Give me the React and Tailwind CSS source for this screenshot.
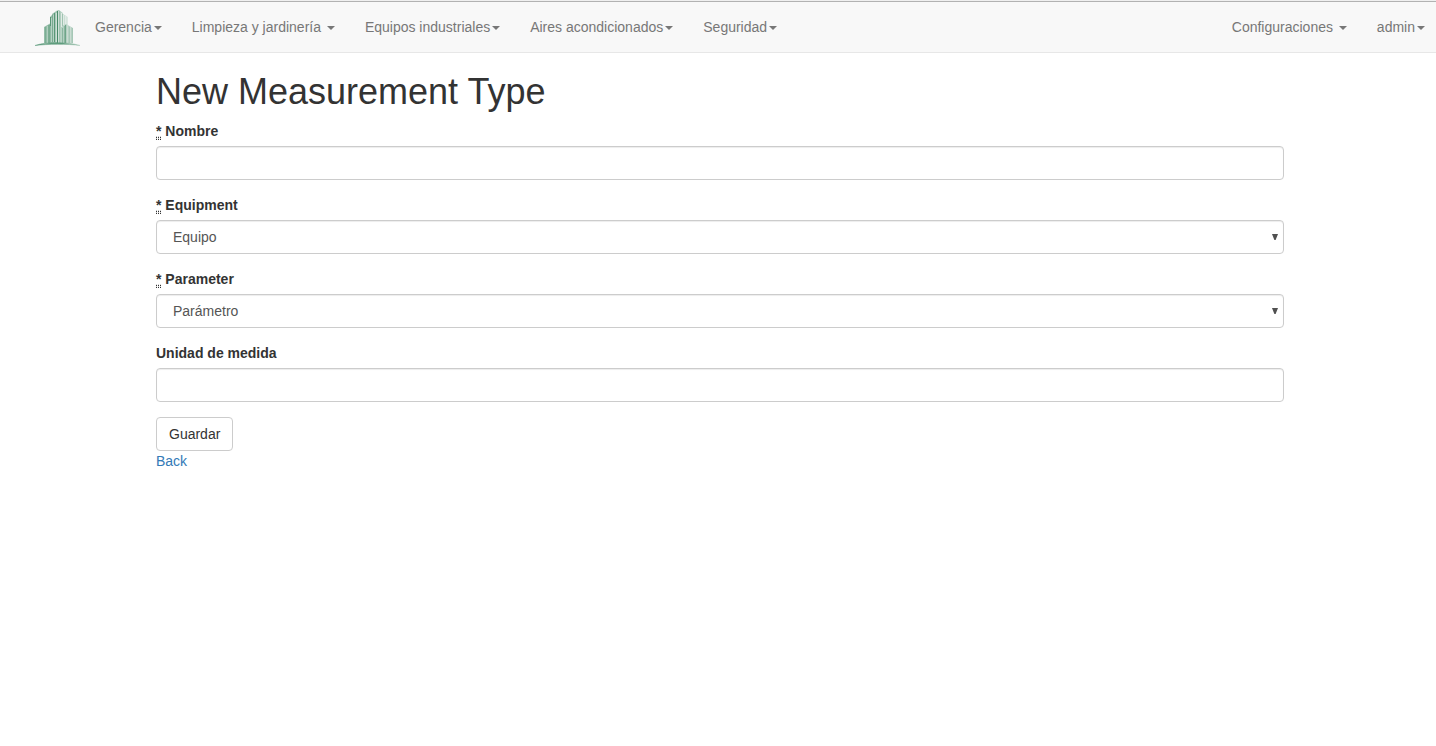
import React from "react";

const caret =
  "inline-block h-0 w-0 border-x-4 border-t-4 border-x-transparent border-t-[#777] align-middle";

function Logo() {
  return (
    <svg width="45" height="38" viewBox="0 0 45 38" aria-hidden="true">
      <defs>
        <linearGradient id="ground" x1="0" x2="1" y1="0" y2="0">
          <stop offset="0" stopColor="#5f9c7d" />
          <stop offset="0.6" stopColor="#5f9c7d" />
          <stop offset="1" stopColor="#a9c9b8" />
        </linearGradient>
        <linearGradient id="tower" x1="0" x2="1" y1="0" y2="0">
          <stop offset="0" stopColor="#8fbaa4" />
          <stop offset="0.5" stopColor="#a9cab9" />
          <stop offset="1" stopColor="#dfeae4" />
        </linearGradient>
      </defs>
      <path d="M15 8L17 6V5L22 1.5L24 1L28 4V5L33 8V34H15Z" fill="url(#tower)" />
      <path d="M9 18L15 14.5V34H9Z" fill="#94bda8" />
      <path d="M27 18L31 15L38 19V34H27Z" fill="#b4d0c2" />
      <g fill="none" strokeWidth="1">
        <path d="M10.5 18V34M13.5 16V34" stroke="#7cae94" />
        <path d="M12.5 17V34" stroke="#b2cfc0" />
        <path d="M15.5 8V17M19.5 4V33" stroke="#5a9777" />
        <path d="M14.5 16V34M17.5 6V33" stroke="#79ac91" />
        <path d="M16.5 9V33M18.5 6V33" stroke="#b7d2c5" />
        <path d="M20.5 4V33" stroke="#a9cab9" />
        <path d="M22.5 2V34" stroke="#488b69" />
        <path d="M21.5 4V33M23.5 2V34" stroke="#cfe0d7" />
        <path d="M24.5 2V34M27.5 5V17" stroke="#9fc3b0" />
        <path d="M26.5 4V18M28.5 6V16M30.5 7V15" stroke="#e1ebe6" />
        <path d="M27.5 19V34M29.5 17V34" stroke="#8ab69f" />
        <path d="M30.5 16V34" stroke="#6fa589" />
        <path d="M32.5 16V34M35.5 18V34" stroke="#cadcd2" />
        <path d="M34.5 18V34M37.5 19V34" stroke="#a6c7b6" />
      </g>
      <path d="M0 36.5C10 32.8 33 32.8 45 36.5C33 34.8 12 35 0 36.5Z" fill="url(#ground)" stroke="url(#ground)" strokeWidth=".5" />
    </svg>
  );
}

function NavItem({ label, spaced }) {
  return (
    <li>
      <a href="#" className="block px-[15px] py-[15px] text-[#777]">
        {label}
        {spaced && " "}
        <b className={`${caret} ml-0.5`} />
      </a>
    </li>
  );
}

function Label({ id, required, children }) {
  return (
    <label htmlFor={id} className="mb-[5px] block font-bold">
      {required && (
        <>
          <abbr title="required" className="border-b border-dotted border-[#333] underline decoration-dotted">
            *
          </abbr>{" "}
        </>
      )}
      {children}
    </label>
  );
}

const control =
  "block h-[34px] w-full rounded-[4px] border border-[#ccc] bg-white px-3 text-[#555] shadow-[inset_0_1px_1px_rgba(0,0,0,0.075)]";

function TextField({ id, label, required }) {
  return (
    <div className="mb-[15px]">
      <Label id={id} required={required}>{label}</Label>
      <input id={id} type="text" className={control} />
    </div>
  );
}

function SelectField({ id, label, placeholder }) {
  return (
    <div className="mb-[15px]">
      <Label id={id} required>{label}</Label>
      <div className="relative">
        <select id={id} className={`${control} appearance-none pl-4`}>
          <option>{placeholder}</option>
        </select>
        <svg className="pointer-events-none absolute right-[6px] top-[14px]" width="6" height="6" viewBox="0 0 6 6" aria-hidden="true">
          <path d="M0 0H6L3.6 6H2.4Z" fill="#505050" />
        </svg>
      </div>
    </div>
  );
}

export default function App() {
  return (
    <div className="font-['Liberation_Sans',Arial,sans-serif] text-sm leading-5 text-[#333]">
      <header className="border-t border-[#f0f0f0]">
        <nav className="flex items-start justify-between border-b border-t border-b-[#e7e7e7] border-t-[#b2b2b2] bg-[#f8f8f8]">
          <div className="flex items-start">
            <a href="#" aria-label="Inicio" className="ml-[35px] mt-[7px]">
              <Logo />
            </a>
            <ul className="flex">
              <NavItem label="Gerencia" />
              <NavItem label="Limpieza y jardinería" spaced />
              <NavItem label="Equipos industriales" />
              <NavItem label="Aires acondicionados" />
              <NavItem label="Seguridad" />
            </ul>
          </div>
          <ul className="flex [&>li:last-child>a]:pr-[11px]">
            <NavItem label="Configuraciones" spaced />
            <NavItem label="admin" />
          </ul>
        </nav>
      </header>
      <main className="mx-auto max-w-[1132px] pl-1 pt-[19px]">
        <h1 className="mb-[9px] text-4xl leading-10 font-medium">New Measurement Type</h1>
        <form onSubmit={(e) => e.preventDefault()}>
          <TextField id="name" label="Nombre" required />
          <SelectField id="equipment" label="Equipment" placeholder="Equipo" />
          <SelectField id="parameter" label="Parameter" placeholder="Parámetro" />
          <TextField id="unit" label="Unidad de medida" />
          <button type="submit" className="block h-[34px] rounded-[4px] border border-[#ccc] bg-white px-3">
            Guardar
          </button>
        </form>
        <a href="#" className="text-[#337ab7]">Back</a>
      </main>
    </div>
  );
}
